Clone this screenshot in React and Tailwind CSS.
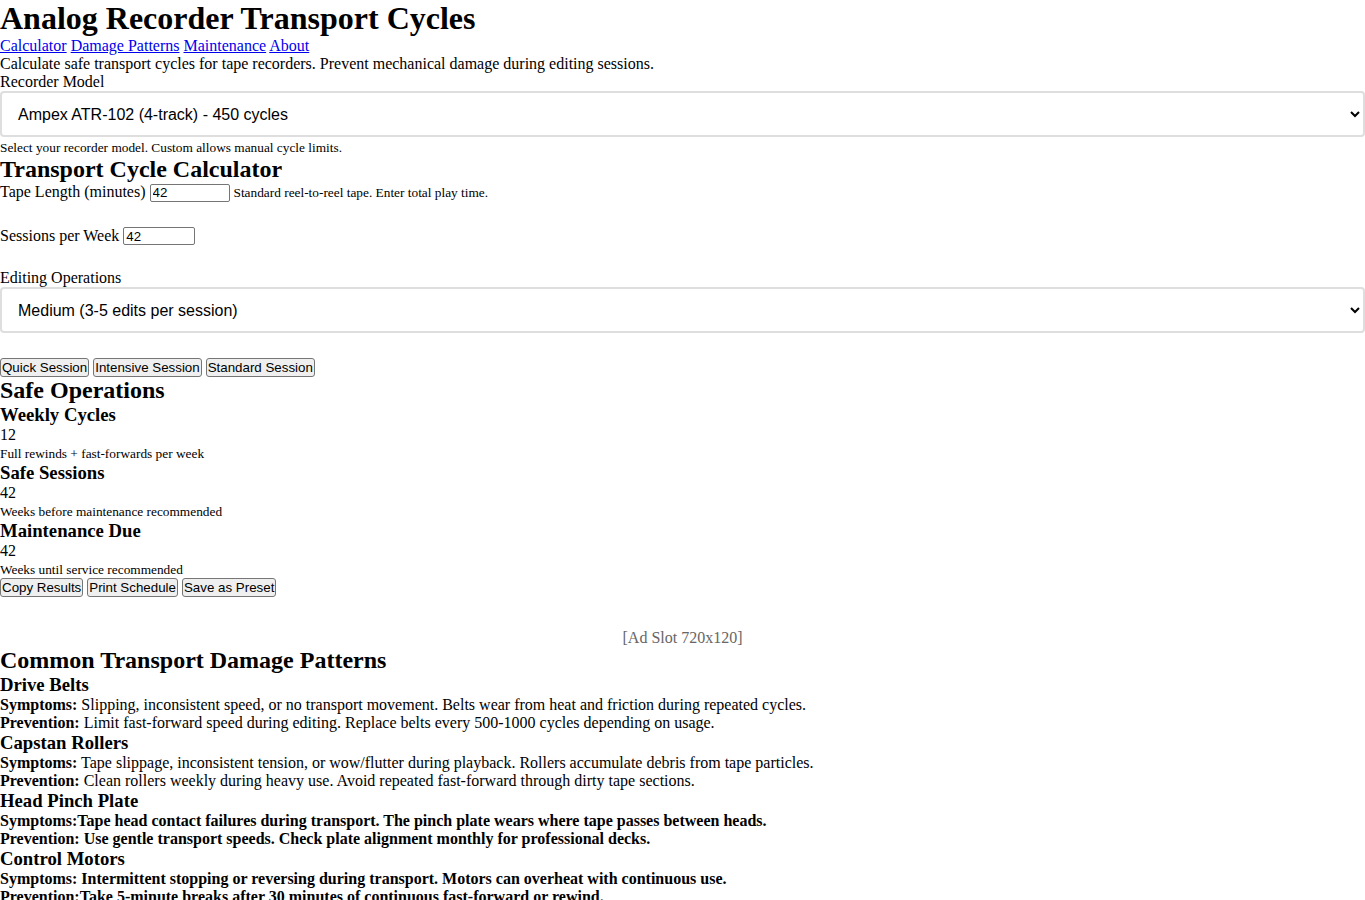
export default function App() {
  const btn =
    "bg-[#efefef] border border-[#767676] rounded-[3px] px-[1px] py-[1px] text-[13.33px] leading-[normal] font-['Liberation_Sans',Arial,sans-serif] text-black";
  const select =
    "block w-full h-[46px] border-2 border-[#dedede] rounded-[4px] bg-white px-[12px] text-[16px] font-['Liberation_Sans',Arial,sans-serif] text-black";
  const input =
    "h-[18px] border border-[#767676] rounded-[2px] bg-white px-[2px] text-[13.33px] leading-[normal] font-['Liberation_Sans',Arial,sans-serif] align-baseline";

  const patterns = [
    {
      title: "Drive Belts",
      symptoms:
        "Slipping, inconsistent speed, or no transport movement. Belts wear from heat and friction during repeated cycles.",
      prevention:
        "Limit fast-forward speed during editing. Replace belts every 500-1000 cycles depending on usage.",
      allBold: false,
    },
    {
      title: "Capstan Rollers",
      symptoms:
        "Tape slippage, inconsistent tension, or wow/flutter during playback. Rollers accumulate debris from tape particles.",
      prevention:
        "Clean rollers weekly during heavy use. Avoid repeated fast-forward through dirty tape sections.",
      allBold: false,
    },
    {
      title: "Head Pinch Plate",
      symptoms:
        "Tape head contact failures during transport. The pinch plate wears where tape passes between heads.",
      prevention:
        " Use gentle transport speeds. Check plate alignment monthly for professional decks.",
      allBold: true,
    },
    {
      title: "Control Motors",
      symptoms:
        " Intermittent stopping or reversing during transport. Motors can overheat with continuous use.",
      prevention:
        "Take 5-minute breaks after 30 minutes of continuous fast-forward or rewind.",
      allBold: true,
    },
  ];

  const results = [
    { title: "Weekly Cycles", value: "12", note: "Full rewinds + fast-forwards per week" },
    { title: "Safe Sessions", value: "42", note: "Weeks before maintenance recommended" },
    { title: "Maintenance Due", value: "42", note: "Weeks until service recommended" },
  ];

  return (
    <div className="font-['Liberation_Serif','Times_New_Roman',serif] text-[16px] leading-[normal] text-black bg-white min-h-[900px]">
      <header>
        <h1 className="text-[32px] font-bold">Analog Recorder Transport Cycles</h1>
        <nav>
          <a href="#calculator" className="text-[#0000ee] underline">Calculator</a>{" "}
          <a href="#patterns" className="text-[#0000ee] underline">Damage Patterns</a>{" "}
          <a href="#maintenance" className="text-[#0000ee] underline">Maintenance</a>{" "}
          <a href="#about" className="text-[#0000ee] underline">About</a>
        </nav>
      </header>

      <main>
        <p>Calculate safe transport cycles for tape recorders. Prevent mechanical damage during editing sessions.</p>

        <div>
          <label className="block">Recorder Model</label>
          <select className={select} defaultValue="atr102">
            <option value="atr102">Ampex ATR-102 (4-track) - 450 cycles</option>
            <option value="custom">Custom</option>
          </select>
          <div className="mt-[1px]">
            <small className="text-[13.33px]">
              Select your recorder model. Custom allows manual cycle limits.
            </small>
          </div>
        </div>

        <section id="calculator">
          <h2 className="text-[24px] font-bold">Transport Cycle Calculator</h2>

          <div className="mb-[25px]">
            <label>Tape Length (minutes)</label>{" "}
            <input className={input + " w-[80px]"} defaultValue="42" />{" "}
            <small className="text-[13.33px]">Standard reel-to-reel tape. Enter total play time.</small>
          </div>

          <div className="mb-[24px]">
            <label>Sessions per Week</label>{" "}
            <input className={input + " w-[72px]"} defaultValue="42" />
          </div>

          <div>
            <label className="block">Editing Operations</label>
            <select className={select} defaultValue="medium">
              <option value="medium">Medium (3-5 edits per session)</option>
            </select>
          </div>

          <div className="flex gap-[4px] mt-[25px]">
            <button className={btn}>Quick Session</button>
            <button className={btn}>Intensive Session</button>
            <button className={btn}>Standard Session</button>
          </div>
        </section>

        <section>
          <h2 className="text-[24px] font-bold">Safe Operations</h2>
          {results.map((r) => (
            <div key={r.title}>
              <h3 className="text-[18.72px] font-bold">{r.title}</h3>
              <div>{r.value}</div>
              <div>
                <small className="text-[13.33px]">{r.note}</small>
              </div>
            </div>
          ))}
          <div className="flex gap-[4px]">
            <button className={btn}>Copy Results</button>
            <button className={btn}>Print Schedule</button>
            <button className={btn}>Save as Preset</button>
          </div>
        </section>

        <div className="pt-[32px] text-center text-[#666]">[Ad Slot 720x120]</div>

        <section id="patterns">
          <h2 className="text-[24px] font-bold">Common Transport Damage Patterns</h2>
          {patterns.map((p) => (
            <div key={p.title}>
              <h3 className="text-[18.72px] font-bold">{p.title}</h3>
              {p.allBold ? (
                <>
                  <p className="font-bold">Symptoms:{p.symptoms}</p>
                  <p className="font-bold">Prevention:{p.prevention}</p>
                </>
              ) : (
                <>
                  <p>
                    <strong>Symptoms:</strong> {p.symptoms}
                  </p>
                  <p>
                    <strong>Prevention:</strong> {p.prevention}
                  </p>
                </>
              )}
            </div>
          ))}
        </section>
      </main>
    </div>
  );
}
